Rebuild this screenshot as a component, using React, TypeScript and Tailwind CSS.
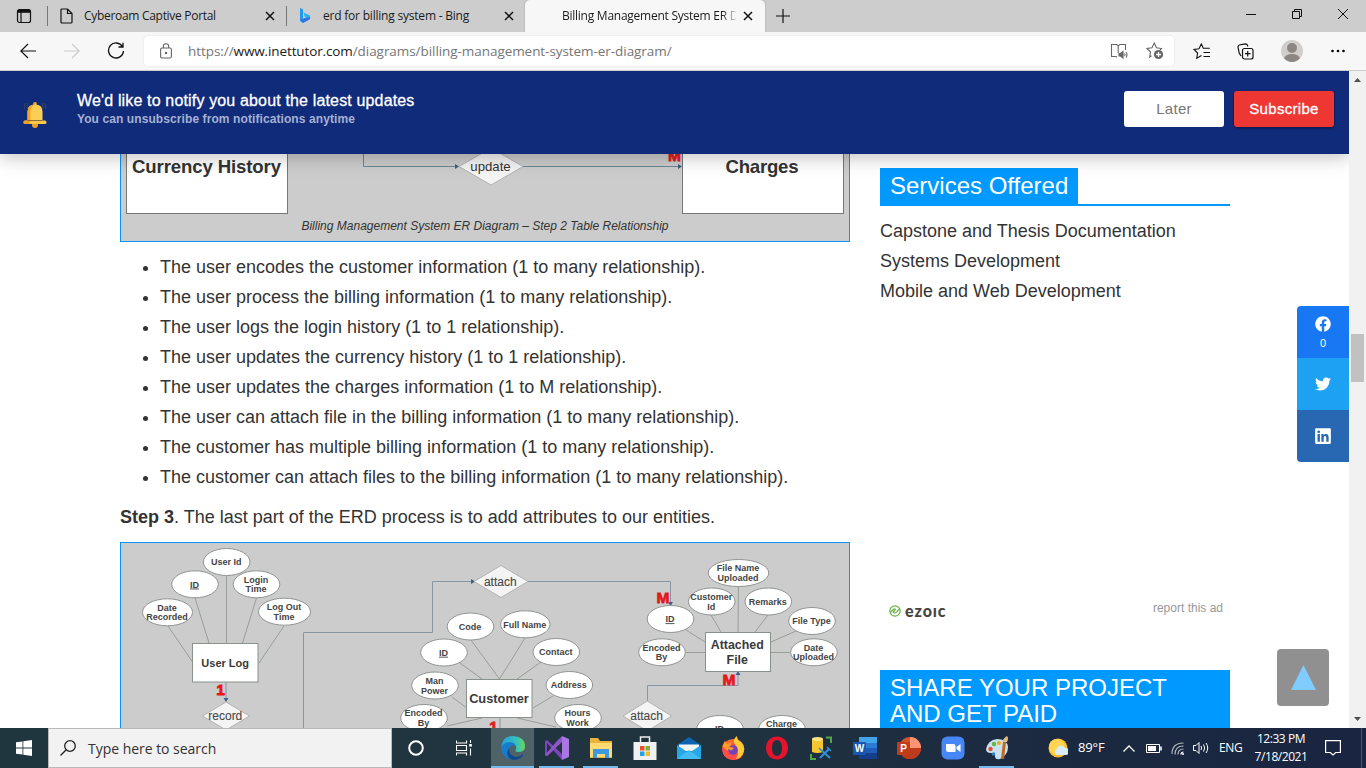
import React from "react";
import { FaFacebook, FaTwitter, FaLinkedin } from "react-icons/fa";

const UI = "font-['Open_Sans','Noto_Sans',sans-serif]";

type Pt = [number, number];

/* ---------- diagram primitives ---------- */

function Bubble({ x, y, rx = 23.3, lines, underline = false }: { x: number; y: number; rx?: number; lines: string[]; underline?: boolean }) {
  return (
    <g>
      <ellipse cx={x} cy={y} rx={rx} ry={13.5} fill="#fff" stroke="#8f9590" strokeWidth="1" />
      {lines.map((t, i) => (
        <text
          key={i}
          x={x - 0.5}
          y={y + 3.2 + (i - (lines.length - 1) / 2) * 9.6}
          textAnchor="middle"
          fontSize="9"
          fontWeight="bold"
          fill="#444"
          textDecoration={underline ? "underline" : undefined}
        >
          {t}
        </text>
      ))}
    </g>
  );
}

function Diamond({ x, y, hw, hh, label }: { x: number; y: number; hw: number; hh: number; label: string }) {
  return (
    <g>
      <polygon points={`${x - hw},${y} ${x},${y - hh} ${x + hw},${y} ${x},${y + hh}`} fill="#f4f4f4" stroke="#b3b3b3" />
      <text x={x - 0.7} y={y + 4} textAnchor="middle" fontSize="12" fill="#484848" stroke="#484848" strokeWidth="0.1">
        {label}
      </text>
    </g>
  );
}

function Spokes({ items }: { items: [Pt, Pt][] }) {
  return (
    <g stroke="#999e99" strokeWidth="1">
      {items.map(([a, b], i) => (
        <line key={i} x1={a[0]} y1={a[1]} x2={b[0]} y2={b[1]} />
      ))}
    </g>
  );
}

function Mark({ x, y, children }: { x: number; y: number; children: string }) {
  return (
    <text x={x} y={y} textAnchor="middle" fontSize="15.5" fontWeight="bold" fill="#e3191c" stroke="#e3191c" strokeWidth="0.8">
      {children}
    </text>
  );
}

function RelationDiagram() {
  return (
    <svg className="block h-[61px] w-[728px] font-['Liberation_Sans',sans-serif]" viewBox="121 154 728 61">
      <rect x="126.5" y="140" width="161" height="73.5" fill="#fff" stroke="#777" />
      <text x="206.5" y="173" textAnchor="middle" fontSize="18.6" fontWeight="bold" fill="#333" textLength="149">Currency History</text>
      <path d="M363.5 150V166.5H457M523 166.5H681" fill="none" stroke="#6f8797" />
      <path d="M455 164l4 2.5-4 2.5zM678 164l4 2.5-4 2.5z" fill="#3d5f80" />
      <Diamond x={491} y={166.5} hw={32} hh={18.5} label="" />
      <text x="490.5" y="171" textAnchor="middle" fontSize="13.2" fill="#333">update</text>
      <Mark x={674.5} y={160.5}>M</Mark>
      <rect x="682.5" y="140" width="161" height="73.5" fill="#fff" stroke="#777" />
      <text x="762" y="173" textAnchor="middle" fontSize="18.6" fontWeight="bold" fill="#333" textLength="73">Charges</text>
    </svg>
  );
}

function AttributeDiagram() {
  return (
    <svg className="block h-[185px] w-[728px] font-['Liberation_Sans',sans-serif]" viewBox="121 543 728 185">
      <g fill="none" stroke="#8796a4" strokeWidth="1">
        <path d="M303.5 730V632.5H432.5V581.5H472M528 581.5H670.5V603" />
        <path d="M738 673V685.5H647.5V702M226 682V698M500 717V730" />
      </g>
      <path d="M471 579l4 2.5-4 2.5zM668 602h5l-2.5 4zM735.5 675h5l-2.5-4zM223.5 698h5l-2.5 4z" fill="#3d5f8c" />
      <Spokes
        items={[
          [[226.5, 576], [226.5, 643]], [[195, 598], [209, 643]], [[256.5, 598], [242.5, 643]],
          [[168, 626], [192.5, 662]], [[284, 626], [259, 663]],
          [[471, 640], [499.5, 679]], [[525, 638], [499.5, 679]], [[460, 663], [482, 679]], [[541, 662], [517, 679]],
          [[452, 697], [467, 708]], [[553, 696], [533, 708]], [[447, 726], [482, 718]], [[517, 718], [556, 727]],
          [[738.5, 586], [738, 632]], [[711, 615], [721, 632]], [[768, 615], [755, 632]],
          [[686, 630], [705, 642]], [[796, 631], [771, 642]], [[685, 652.5], [705, 652.5]], [[771, 652.5], [791, 652.5]],
        ]}
      />
      <Bubble x={226.7} y={562} lines={["User Id"]} />
      <Bubble x={195} y={584.3} lines={["ID"]} underline />
      <Bubble x={256.5} y={584.3} lines={["Login", "Time"]} />
      <Bubble x={167.5} y={612.3} rx={25} lines={["Date", "Recorded"]} />
      <Bubble x={284.5} y={611.7} rx={26} lines={["Log Out", "Time"]} />
      <rect x="192.5" y="643.5" width="65.5" height="38.5" fill="#fff" stroke="#8a918a" />
      <text x="225.2" y="667" textAnchor="middle" fontSize="11" fontWeight="bold" fill="#3a3a3a">User Log</text>
      <Mark x={220.5} y={695}>1</Mark>
      <Diamond x={226} y={716} hw={23.5} hh={14} label="record" />
      <Diamond x={501} y={581.5} hw={27} hh={16} label="attach" />

      <Bubble x={470.5} y={626.5} lines={["Code"]} />
      <Bubble x={525.3} y={624.3} rx={24.7} lines={["Full Name"]} />
      <Bubble x={444} y={652.5} lines={["ID"]} underline />
      <Bubble x={556.3} y={652} lines={["Contact"]} />
      <Bubble x={435} y={685.5} lines={["Man", "Power"]} />
      <Bubble x={569.3} y={685} lines={["Address"]} />
      <Bubble x={424} y={718} lines={["Encoded", "By"]} />
      <Bubble x={578} y={718} lines={["Hours", "Work"]} />
      <rect x="466.5" y="679.5" width="65.5" height="38" fill="#fff" stroke="#8a918a" />
      <text x="499" y="703" textAnchor="middle" fontSize="12.8" fontWeight="bold" fill="#3a3a3a">Customer</text>
      <Mark x={493.5} y={731.5}>1</Mark>

      <Bubble x={738.5} y={573} rx={30.3} lines={["File Name", "Uploaded"]} />
      <Bubble x={711.7} y={601.5} lines={["Customer", "Id"]} />
      <Bubble x={768.3} y={601.5} lines={["Remarks"]} />
      <Bubble x={670.5} y={619} lines={["ID"]} underline />
      <Bubble x={812} y={621} lines={["File Type"]} />
      <Bubble x={662} y={652.3} lines={["Encoded", "By"]} />
      <Bubble x={814} y={652.3} lines={["Date", "Uploaded"]} />
      <rect x="705.5" y="632.5" width="65" height="39" fill="#fff" stroke="#8a918a" />
      <text x="737.3" y="649" textAnchor="middle" fontSize="12.4" fontWeight="bold" fill="#3a3a3a">Attached</text>
      <text x="737.3" y="663.5" textAnchor="middle" fontSize="12.4" fontWeight="bold" fill="#3a3a3a">File</text>
      <Mark x={663} y={603}>M</Mark>
      <Mark x={729} y={684.5}>M</Mark>
      <Diamond x={647.3} y={716} hw={24.3} hh={15} label="attach" />
      <Bubble x={720} y={729} lines={["ID"]} underline />
      <Bubble x={782} y={729} lines={["Charge", " "]} />
    </svg>
  );
}

/* ---------- browser chrome ---------- */

function CloseX() {
  return (
    <svg className="h-[10px] w-[10px] shrink-0" viewBox="0 0 10 10" stroke="#111" strokeWidth="1.5">
      <path d="M1 1l8 8M9 1L1 9" />
    </svg>
  );
}

function TabBar() {
  return (
    <div className={`flex h-8 shrink-0 bg-[#cdcdcd] text-[12px] text-[#1b1b1b] ${UI}`}>
      <div className="flex w-[47px] items-center pl-4">
        <svg className="h-4 w-4" viewBox="0 0 16 16" fill="none" stroke="#111" strokeWidth="1.2">
          <rect x="1.5" y="1.5" width="13" height="13" rx="2" />
          <path d="M2 3.3h12" strokeWidth="3" />
          <path d="M5 4v10" />
        </svg>
      </div>
      <div className="flex w-[239px] items-center">
        <div className="h-5 w-px bg-[#777]" />
        <svg className="ml-3 h-4 w-[13px] shrink-0" viewBox="0 0 13 16" fill="none" stroke="#111" strokeWidth="1.2">
          <path d="M1 2a1 1 0 011-1h5.5L12 5.5V14a1 1 0 01-1 1H2a1 1 0 01-1-1zM7.5 1v4.5H12" />
        </svg>
        <span className="ml-[11px] w-[181px] shrink-0 whitespace-nowrap tracking-[-0.3px]">Cyberoam Captive Portal</span>
        <CloseX />
      </div>
      <div className="flex w-[239px] items-center">
        <div className="h-5 w-px bg-[#777]" />
        <svg className="ml-3 h-4 w-3 shrink-0" viewBox="0 0 12 16">
          <path d="M1 0l3 1.2v10.3L1 13.5z" fill="#2199ef" />
          <path d="M4.5 4.5L11 7.5v3.5L4 15l-3-2 6-3.5-1.3-.8z" fill="#27b4ec" />
          <path d="M1 11.5L4 15l7-4V9z" fill="#3171e5" />
        </svg>
        <span className="ml-3 w-[181px] shrink-0 whitespace-nowrap tracking-[-0.21px]">erd for billing system - Bing</span>
        <CloseX />
      </div>
      <div className="flex w-[240px] items-center rounded-t-[5px] bg-[#f7f7f7] pl-[37px] shadow-[0_0_2px_#999]">
        <span className="w-[174px] overflow-hidden whitespace-nowrap tracking-[-0.25px] [mask-image:linear-gradient(to_right,#000_160px,transparent_176px)]">
          Billing Management System ER Diagram
        </span>
        <span className="ml-[7px] flex"><CloseX /></span>
      </div>
      <div className="flex flex-1 items-center pl-[11px]">
        <svg className="h-[14px] w-[14px]" viewBox="0 0 14 14" stroke="#111" strokeWidth="1.2"><path d="M7 0v14M0 7h14" /></svg>
      </div>
      <div className="flex w-[120px] justify-between pr-[17px] pt-2">
        <svg className="h-3 w-[11px]" viewBox="0 0 11 12" stroke="#111"><path d="M0 6.5h10" /></svg>
        <svg className="h-3 w-3" viewBox="0 0 12 12" fill="none" stroke="#111"><path d="M1.5 3.5h7v7h-7zM3.5 3V1.5h7v7H9" /></svg>
        <svg className="h-3 w-3" viewBox="0 0 12 12" stroke="#111"><path d="M1 1l10 10M11 1L1 11" /></svg>
      </div>
    </div>
  );
}

function Toolbar() {
  return (
    <div className={`flex h-[39px] shrink-0 items-center border-b border-[#cdcdcd] bg-[#f7f7f7] ${UI}`}>
      <div className="flex w-36 items-center pl-5">
        <svg className="h-4 w-4" viewBox="0 0 16 16" fill="none" stroke="#111" strokeWidth="1.2"><path d="M16 8H.8M8 1L.8 8 8 15" /></svg>
        <svg className="ml-7 h-4 w-4" viewBox="0 0 16 16" fill="none" stroke="#ccc" strokeWidth="1.2"><path d="M0 8h15.2M8 1l7.2 7L8 15" /></svg>
        <svg className="ml-[27px] h-[18px] w-[18px]" viewBox="0 0 18 18" fill="none" stroke="#111" strokeWidth="1.3">
          <path d="M15.5 4.7A7.5 7.5 0 1016.5 9M16 .7v4.3h-4.5" />
        </svg>
      </div>
      <div className="flex h-[30px] w-[1030px] items-center rounded-[4px] bg-white pl-4 shadow-[0_0_2px_#ddd]">
        <svg className="h-4 w-3 shrink-0" viewBox="0 0 12 16" fill="none" stroke="#666" strokeWidth="1.1">
          <rect x=".6" y="5" width="10.8" height="10" rx="1.5" />
          <path d="M3.3 5V3.5a2.7 2.7 0 015.4 0V5" />
          <circle cx="6" cy="10" r=".7" fill="#444" />
        </svg>
        <span className="ml-4 flex-1 whitespace-nowrap text-[13.5px] tracking-[-0.06px] text-[#767676]">
          https://<span className="tracking-[-0.12px] text-[#1a1a1a]">www.inettutor.com</span>/diagrams/billing-management-system-er-diagram/
        </span>
        <svg className="mr-px h-[17px] w-[18px]" viewBox="0 0 18 17" fill="none" stroke="#666" strokeWidth="1.1">
          <path d="M7 14.2l-1-.7H1.5V1.5h5l1.7 1.2V10M8.200 2.700L10 1.500h5.500V7" />
          <path d="M9 10.5h1.5L13 8.500v6.500l-2.500-2H9z" fill="#666" />
          <path d="M14.500 10.500q1 1.200 0 2.500M16 9q2 2.700 0 5.500" />
        </svg>
        <svg className="ml-[17px] mr-[10px] h-[18px] w-[18px]" viewBox="0 0 18 18" fill="none" stroke="#666" strokeWidth="1.1">
          <path d="M5.500 13.700L3.700 15l.8-5L1 6.500l5-.8L8.300 1l2.200 4.700 5 .8-1.500 1.500" />
          <circle cx="12.5" cy="12.5" r="4.6" fill="#666" stroke="none" />
          <path d="M12.500 10v5M10 12.500h5" stroke="#fff" strokeWidth="1.3" />
        </svg>
      </div>
      <div className="flex items-center">
        <svg className="ml-[19px] h-[17px] w-[18px]" viewBox="0 0 18 17" fill="none" stroke="#111" strokeWidth="1.1">
          <path d="M8.500 12.500l-4.800 2.700.9-5.200L1 6.500l5-.8L8.300 1l2 4.200h6.500M10.500 9.500h6.500M10.500 13.500h6.500" />
        </svg>
        <svg className="ml-[26px] mr-px h-[17px] w-[17px]" viewBox="0 0 17 17" fill="none" stroke="#111" strokeWidth="1.2">
          <rect x="5.500" y="5.500" width="10.5" height="10.5" rx="2" />
          <path d="M10.700 8v5.500M8 10.700h5.500M4 13L2.200 10 1 4q0-1.500 1.300-2L8.500.8q1.500 0 2 1.500l.3 1.200" />
        </svg>
        <svg className="ml-[26px] h-[22px] w-[22px]" viewBox="0 0 22 22">
          <circle cx="11" cy="11" r="11" fill="#d0cecb" />
          <circle cx="11" cy="8" r="5" fill="#8b8683" />
          <path d="M3 18.300Q5 14 11 14t8 4.300Q15.500 22 11 22t-8-3.700z" fill="#8b8683" />
        </svg>
        <svg className="ml-7 h-1 w-[14px]" viewBox="0 0 14 4"><circle cx="1.5" cy="2" r="1.3" /><circle cx="7" cy="2" r="1.3" /><circle cx="12.5" cy="2" r="1.3" /></svg>
      </div>
    </div>
  );
}

/* ---------- page ---------- */

function Bell() {
  return (
    <svg className="h-7 w-[26px]" viewBox="0 0 26 28">
      <path d="M3 8Q1 5 4 2M6 8Q4 5 6.500 2M23 8q2-3-1-6M20 8q2-3-.5-6" fill="none" stroke="#39435c" strokeWidth="1.1" />
      <circle cx="13" cy="3" r="1.9" fill="#f5a72c" />
      <circle cx="13" cy="24" r="3" fill="#e9a02c" />
      <path d="M5.500 21V10.500Q5.500 3.500 13 3.500t7.500 7V21z" fill="#fbcf55" />
      <path d="M5.500 21V10.500Q5.500 3.500 13 3.500 8.500 5 8.500 11v10z" fill="#f4a429" />
      <rect x="1.5" y="19.5" width="23" height="3.6" rx="1.7" fill="#fbc64b" />
      <path d="M3.200 19.500h5.300l-1 3.600H3.200a1.700 1.700 0 010-3.600z" fill="#f09d28" />
      <path d="M5.500 19.500h15" stroke="#6d5535" strokeWidth=".8" />
    </svg>
  );
}

function Banner() {
  return (
    <div className="relative z-10 flex h-[83px] shrink-0 bg-[#112b7b] pl-[22px] pr-[15px] shadow-[0_3px_18px_rgba(0,0,0,0.25)]">
      <div className="pt-[30px]"><Bell /></div>
      <div className="ml-[29px] flex-1 pt-5">
        <div className="text-[16px] leading-[20px] tracking-[0.155px] text-white [-webkit-text-stroke:0.3px_white]">We'd like to notify you about the latest updates</div>
        <div className="text-[12px] font-bold leading-[16px] tracking-[0.09px] text-[#a5b1d2]">You can unsubscribe from notifications anytime</div>
      </div>
      <div className="flex gap-[10px] pt-5 text-[15px] tracking-[0.3px]">
        <div className="flex h-9 w-[100px] items-center justify-center rounded-[3px] bg-white text-[#777]">Later</div>
        <div className="flex h-9 w-[100px] items-center justify-center rounded-[3px] bg-[#ee3733] text-white shadow-[0_1px_3px_rgba(0,0,0,0.5)] [-webkit-text-stroke:0.3px_white]">Subscribe</div>
      </div>
    </div>
  );
}

const RELATIONS = [
  "The user encodes the customer information (1 to many relationship).",
  "The user process the billing information (1 to many relationship).",
  "The user logs the login history (1 to 1 relationship).",
  "The user updates the currency history (1 to 1 relationship).",
  "The user updates the charges information (1 to M relationship).",
  "The user can attach file in the billing information (1 to many relationship).",
  "The customer has multiple billing information (1 to many relationship).",
  "The customer can attach files to the billing information (1 to many relationship).",
];

function Article() {
  return (
    <article className="w-[730px] shrink-0 text-[18px] leading-[30px] text-[#333]">
      <figure className="h-[88px] border border-t-0 border-[#0896f5] bg-[#ccc]">
        <RelationDiagram />
        <figcaption className="text-center text-[12px] italic leading-[22px]">Billing Management System ER Diagram – Step 2 Table Relationship</figcaption>
      </figure>
      <ul className="mt-[10px] list-disc pl-10">
        {RELATIONS.map((r) => <li key={r} className="whitespace-nowrap">{r}</li>)}
      </ul>
      <p className="mt-[10px]"><b>Step 3</b>. The last part of the ERD process is to add attributes to our entities.</p>
      <figure className="mt-[10px] border border-b-0 border-[#0896f5] bg-[#ccc]"><AttributeDiagram /></figure>
    </article>
  );
}

function Sidebar() {
  return (
    <aside className="ml-[30px] flex w-[350px] flex-col pt-[14px] text-[18px] text-[#333]">
      <div className="flex border-b-2 border-[#0099ff]">
        <h3 className="h-9 w-[198px] whitespace-nowrap bg-[#0099ff] pl-[10px] text-[24px] leading-9 text-white">Services Offered</h3>
      </div>
      <ul className="mt-[10px] leading-[30px]">
        <li>Capstone and Thesis Documentation</li>
        <li>Systems Development</li>
        <li>Mobile and Web Development</li>
      </ul>
      <div className="mt-[295px] flex h-[18px] items-start justify-between pl-[9px] pr-[7px]">
        <div className="flex items-center pt-[4px]">
          <svg className="h-3 w-3" viewBox="0 0 12 12" fill="none" stroke="#68af45" strokeWidth="1.2">
            <circle cx="6" cy="6" r="5.2" /><path d="M1.500 7.500l3-3.200q1.500-1 1.800 0 0 1-1.500 2.200T5.700 8q1 0 2-1.200l3-3.200" />
          </svg>
          <span className="ml-[4px] font-['Lato',sans-serif] text-[16px] font-black leading-[12px] tracking-[0.9px] text-[#474341]">ezoıc</span>
        </div>
        <span className="text-[12px] leading-[14px] text-[#999]">report this ad</span>
      </div>
      <div className="mt-[51px] flex-1 bg-[#0099ff] pl-[10px] pt-[5px] text-[24px] leading-[26px] text-white">SHARE YOUR PROJECT<br />AND GET PAID</div>
    </aside>
  );
}

function FloatingTools() {
  return (
    <>
      <div className="absolute right-0 top-[235px] z-20 w-[52px] overflow-hidden rounded-l-[4px] text-white">
        <div className="flex h-[52px] flex-col items-center bg-[#1877f2] pt-[10px] text-[11px] leading-[13px]"><FaFacebook size={16} /><span className="mt-[5px]">0</span></div>
        <div className="flex h-[52px] items-center justify-center bg-[#1da1f2]"><FaTwitter size={16} /></div>
        <div className="flex h-[52px] items-center justify-center bg-[#2867b2]"><FaLinkedin size={18} /></div>
      </div>
      <div className="absolute right-5 top-[578px] z-20 flex h-[57px] w-[52px] items-center justify-center rounded-[4px] bg-[#909090]">
        <svg className="h-[25px] w-[25px]" viewBox="0 0 25 25"><path d="M12.500 0L25 25H0z" fill="#80ccff" /></svg>
      </div>
    </>
  );
}

function Scrollbar() {
  return (
    <div className="flex w-[17px] flex-col items-center bg-[#f1f1f1]">
      <svg className="mt-[7px] h-1 w-[7px]" viewBox="0 0 7 4"><path d="M3.500 0L7 4H0z" fill="#505050" /></svg>
      <div className="mt-[252px] h-12 w-[13px] bg-[#c1c1c1]" />
      <svg className="mb-[7px] mt-auto h-1 w-[7px]" viewBox="0 0 7 4"><path d="M3.500 4L7 0H0z" fill="#505050" /></svg>
    </div>
  );
}

/* ---------- taskbar ---------- */

const APPS: { name: string; state?: "active" | "open"; art: React.ReactNode }[] = [
  {
    name: "edge", state: "active",
    art: (
      <>
        <defs>
          <linearGradient id="eg" x1="0" y1=".3" x2="1" y2=".3"><stop offset="0" stopColor="#249fd9" /><stop offset=".6" stopColor="#33bfc6" /><stop offset="1" stopColor="#66d65a" /></linearGradient>
        </defs>
        <path d="M0 12Q1 0 12 0q12 1 12 10 0 6-6.500 6-3.500 0-3-2 1-1 .7-3Q14 7 9.500 7 3 7.500 0 12z" fill="url(#eg)" />
        <path d="M0 12Q2 6.500 9 6q5 .5 6 4-5-2-6.500 2.500-1 6.500 6 9.500-2 2-5 1.500Q1 21.500 0 12z" fill="#187cc8" />
        <path d="M8.500 12.500Q7 18 13 20.500q5 1 8.500-2 1-.3.8.8Q19 24 12 24 5 22 6.500 15q.5-2 2-2.500z" fill="#114a8b" />
      </>
    ),
  },
  {
    name: "visual-studio", state: "open",
    art: (
      <>
        <path d="M17 0l7 3v18l-7 3z" fill="#a877df" />
        <path d="M0 5l2-1 15 14v6L2 7v10l4-4 2 2-6 5-2-1z" fill="#7d45bd" />
        <path d="M17 0v6L2 20l-2-1L12 5z" fill="#8e56c8" />
      </>
    ),
  },
  {
    name: "explorer", state: "open",
    art: (
      <>
        <path d="M1 2h8l2 3h12v17H1z" fill="#e8b43c" /><path d="M1 7h22v14H1z" fill="#ffda70" /><path d="M4 13h16v9h-4v-4H8v4H4z" fill="#3d9ae2" />
      </>
    ),
  },
  {
    name: "store",
    art: (
      <>
        <path d="M7.500 6V1h9v5" fill="none" stroke="#eee" strokeWidth="1.5" /><path d="M.5 6h23v18H.5z" fill="#f1f1f1" />
        <path d="M7 10h4.500v4.500H7z" fill="#e5502a" /><path d="M12.500 10H17v4.500h-4.500z" fill="#79b531" /><path d="M7 15.500h4.500V20H7z" fill="#25a2de" /><path d="M12.500 15.500H17V20h-4.500z" fill="#f4b928" />
      </>
    ),
  },
  {
    name: "mail",
    art: (
      <><path d="M0 9L12 1l12 8v3H0z" fill="#0c65ae" /><path d="M2 8.500h20V15H2z" fill="#f6f6f6" /><path d="M0 9l12 8 12-8v14H0z" fill="#28a7e8" /><path d="M0 23L12 14l12 9z" fill="#41bdf3" /></>
    ),
  },
  {
    name: "firefox",
    art: (
      <>
        <circle cx="12" cy="13.5" r="10.5" fill="#ff6b2c" /><path d="M12 24Q1 23 1 11L4 5l2 3 4-2q3 0 5 4l3-6q6 4 5 11-1 9-11 9z" fill="#ff4d48" />
        <path d="M13 7q-1-4 3-7 0 4 4 6 4 4 3 9-2 7-8 8 5-8-2-16z" fill="#ffca32" /><path d="M1.500 10L4 5l2 3 5-2-2 5 4 1-3 3q-5 0-8.500-5z" fill="#ff9d24" />
        <circle cx="12" cy="14" r="4.8" fill="#7440bd" /><path d="M6 12q4-2 7 .5l-3 2z" fill="#ff9626" />
      </>
    ),
  },
  { name: "opera", art: <path fillRule="evenodd" d="M12 .5c6.500 0 11 5 11 11.500S18.500 23.500 12 23.500 1 18.500 1 12 5.500.5 12 .5zM12 4c-3 0-5 3.500-5 8s2 8 5 8 5-3.500 5-8-2-8-5-8z" fill="#e3142b" /> },
  {
    name: "sql-tools",
    art: (
      <>
        <path d="M3 3v13q5 2 11 0V3z" fill="#f7c52f" /><ellipse cx="8.5" cy="3" rx="5.5" ry="2" fill="#ffe483" />
        <path d="M17 1.500h5V7M2 18v5h5" fill="none" stroke="#52a64b" strokeWidth="2" /><path d="M11 22l9-9M12 14l9 8" stroke="#2f91d3" strokeWidth="2" /><path d="M18 11l4 4M10 12l3 3" stroke="#2f91d3" strokeWidth="1.5" />
      </>
    ),
  },
  {
    name: "word",
    art: (
      <>
        <path d="M6 1h18v6H6z" fill="#42a4ea" /><path d="M6 7h18v5H6z" fill="#2b7bd3" /><path d="M6 12h18v5H6z" fill="#1e5cb8" /><path d="M6 17h18v6H6z" fill="#153e8b" /><rect y="6" width="13" height="13" rx="1" fill="#1856b0" />
        <text x="6.5" y="16" textAnchor="middle" fontSize="10" fontWeight="bold" fill="#fff">W</text>
      </>
    ),
  },
  {
    name: "powerpoint",
    art: (
      <>
        <circle cx="13" cy="12" r="11" fill="#d4512d" /><path d="M13 1a11 11 0 0111 11H13z" fill="#ff9574" /><path d="M2 12h22A11 11 0 012 12z" fill="#bd3b1c" /><rect y="6" width="13" height="13" rx="1" fill="#c03d1a" />
        <text x="6.5" y="16" textAnchor="middle" fontSize="10" fontWeight="bold" fill="#fff">P</text>
      </>
    ),
  },
  { name: "zoom", art: <><rect x=".5" y=".5" width="23" height="23" rx="6" fill="#4687f5" /><path d="M5 8h7q2.500 0 2.500 2v6h-7Q5 16 5 14zM15.500 11l4-3v8l-4-3z" fill="#fff" /></> },
  {
    name: "paint", state: "open",
    art: (
      <>
        <path d="M1 13Q3 4 12 3q10 0 11 8 0 8-8 12-5 1-5-3 0-3-4-3-5 0-5-4z" fill="#c9e2ed" />
        <circle cx="5.5" cy="13" r="2.2" fill="#e44c40" /><circle cx="9" cy="8" r="2.2" fill="#67b646" /><circle cx="14" cy="7" r="2" fill="#e9ad24" /><circle cx="8.5" cy="18" r="1.8" fill="#397fc3" />
        <path d="M18 6h3l-2 17h-3z" fill="#bd6823" /><path d="M17.500 6Q18 2 22 0q2 2 0 6z" fill="#dfbd82" />
      </>
    ),
  },
];

function Taskbar() {
  return (
    <div className={`flex h-10 shrink-0 bg-[linear-gradient(90deg,#20363f,#20343f_50%,#1c2b40_72%,#1a2541)] text-white ${UI}`}>
      <div className="flex w-12 items-center justify-center">
        <svg className="h-4 w-4" viewBox="0 0 16 16" fill="#fff"><path d="M0 2.300L6.500 1.400v6.200H0zM7.300 1.300L16 0v7.600H7.300zM0 8.400h6.500v6.200L0 13.700zM7.300 8.400H16V16l-8.700-1.300z" /></svg>
      </div>
      <div className="flex w-[344px] items-center border border-[#b9b9b9] bg-[#f2f2f2] pl-[11px]">
        <svg className="h-4 w-4" viewBox="0 0 16 16" fill="none" stroke="#222" strokeWidth="1.3"><circle cx="10" cy="6" r="5.3" /><path d="M6.200 9.800L.5 15.500" /></svg>
        <span className="ml-3 text-[14px] tracking-[-0.03px] text-[#333]">Type here to search</span>
      </div>
      <div className="flex w-12 items-center justify-center">
        <svg className="h-4 w-4" viewBox="0 0 16 16" fill="none" stroke="#fff" strokeWidth="2"><circle cx="8" cy="8" r="6.8" /></svg>
      </div>
      <div className="flex w-[51px] items-center pl-4">
        <svg className="h-4 w-4" viewBox="0 0 16 16" fill="none" stroke="#fff" strokeWidth="1.1"><path d="M.5.5V3h10V.5M.5 5.500h10v5H.5zM.5 15.500V13h10v2.500M14.500 0v3M14.500 8.500v7" /><path d="M13.200 4h2.600v2.600h-2.600z" fill="#fff" stroke="none" /></svg>
      </div>
      <div className="flex">
        {APPS.map((a) => (
          <div key={a.name} className="flex w-11 justify-start">
            <div className={`flex w-[43px] flex-col items-center ${a.state === "active" ? "bg-[#4f6268]" : ""}`}>
              <svg className="mt-2 h-6 w-6 shrink-0 font-['Liberation_Sans',sans-serif]" viewBox="0 0 24 24">{a.art}</svg>
              {a.state && <div className={`mt-auto h-[2px] bg-[#76b9ed] ${a.state === "active" ? "w-[43px]" : "w-[35px]"}`} />}
            </div>
          </div>
        ))}
      </div>
      <div className="ml-[29px] flex w-[75px] items-center">
        <svg className="h-5 w-5 shrink-0" viewBox="0 0 20 20"><circle cx="10" cy="10" r="9.5" fill="#fcb92d" /><circle cx="9" cy="9" r="8" fill="#ffd451" /><path d="M9 17a3.500 3.500 0 010-6.500 4.300 4.300 0 018-.5 3.500 3.500 0 011 7z" fill="#d7edfc" /></svg>
        <span className="ml-[10px] text-[13px] tracking-[-0.15px]">89°F</span>
      </div>
      <div className="flex w-[96px] items-center">
        <svg className="h-[7px] w-3" viewBox="0 0 12 7" fill="none" stroke="#fff" strokeWidth="1.3"><path d="M.5 6.500L6 1l5.500 5.500" /></svg>
        <svg className="ml-[11px] h-[9px] w-4" viewBox="0 0 16 9" fill="none" stroke="#fff"><path d="M.5.5h13v8H.5z" /><path d="M2 2h8v5H2z" fill="#fff" stroke="none" /><path d="M15 2.500v4" strokeWidth="1.6" /></svg>
        <svg className="ml-[9px] h-[13px] w-[13px]" viewBox="0 0 13 13" fill="none" stroke="#aeb5bd" strokeWidth="1.2"><path d="M1 12Q1 1 12.500 1M4 12.500Q4 4 12.500 4M7 12.500Q7 7 12.500 7" /><path d="M10 12.500Q10 10 12.500 10" stroke="#fff" /><circle cx="12" cy="12" r="1" fill="#fff" stroke="none" /></svg>
        <svg className="ml-[9px] h-[14px] w-[17px]" viewBox="0 0 17 14" fill="none" stroke="#fff"><path d="M.5 4.500H3l3-3v11l-3-3H.5zM8 5q1.200 2 0 4M10.500 3.500q2.400 3.500 0 7M13 2q3.500 5 0 10" /></svg>
      </div>
      <div className="flex w-[32px] items-center text-[12px] tracking-[-0.4px]">ENG</div>
      <div className="flex w-[60px] flex-col items-center pt-[2px] text-[12px] leading-[18px] tracking-[-0.45px]"><span className="whitespace-nowrap">12:33 PM</span><span>7/18/2021</span></div>
      <div className="flex flex-1 items-center pl-[14px]">
        <svg className="h-4 w-4" viewBox="0 0 16 16" fill="none" stroke="#fff" strokeWidth="1.2"><path d="M.6.6h14.800v11.900h-4.700L8 15l-2.700-2.500H.6z" /></svg>
      </div>
      <div className="mr-[4px] w-px bg-[#4d566a]" />
    </div>
  );
}

export default function App() {
  return (
    <div className="flex h-[768px] w-[1366px] flex-col overflow-hidden bg-white font-['Liberation_Sans',Arial,sans-serif]">
      <TabBar />
      <Toolbar />
      <div className="flex h-[657px] shrink-0">
        <div className="relative flex w-[1349px] flex-col overflow-hidden">
          <Banner />
          <main className="flex h-[574px] pl-[120px]">
            <Article />
            <Sidebar />
          </main>
          <FloatingTools />
        </div>
        <Scrollbar />
      </div>
      <Taskbar />
    </div>
  );
}
